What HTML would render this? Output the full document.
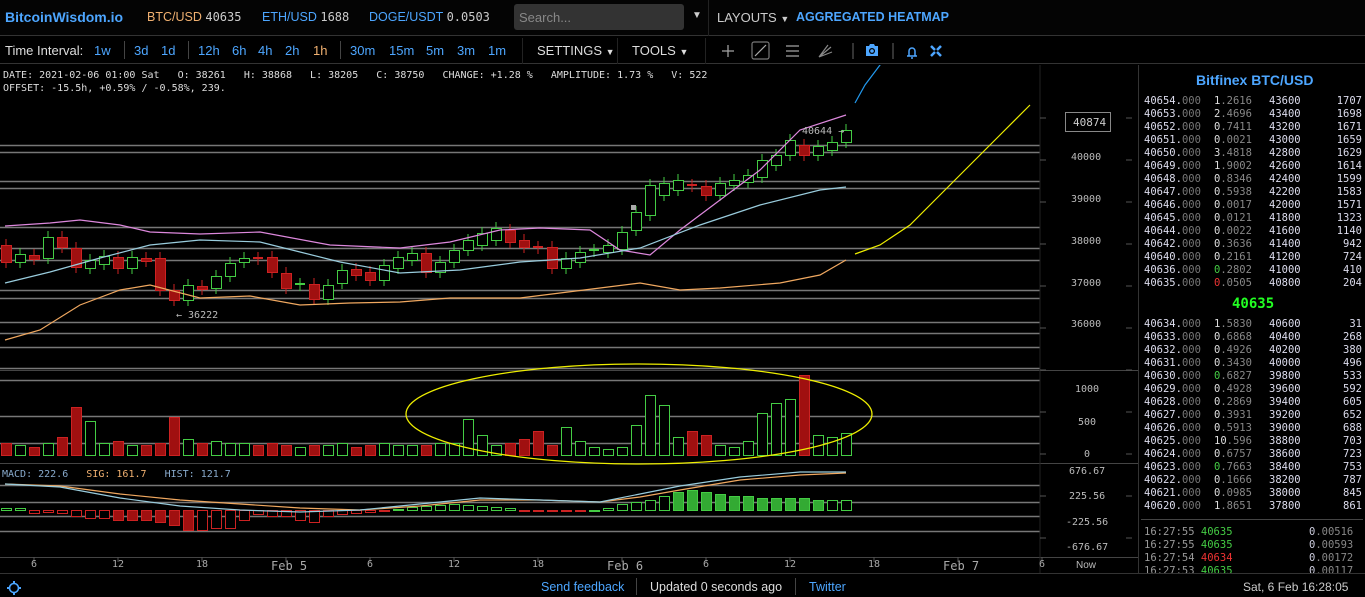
<!DOCTYPE html>
<html><head><meta charset="utf-8"><style>
*{margin:0;padding:0;box-sizing:border-box}
body{width:1365px;height:597px;background:#000;overflow:hidden;position:relative;font-family:"Liberation Sans",sans-serif;color:#ccc}
.a{position:absolute;white-space:nowrap}
.m{font-family:"DejaVu Sans Mono","Liberation Mono",monospace}
#top{top:0;left:0;width:1365px;height:36px;border-bottom:1px solid #333;background:#040404}
#tb{top:37px;left:0;width:1365px;height:27px;border-bottom:1px solid #333}
.tbi{position:absolute;top:43px;font-size:13px;color:#4da6ff}
.sep{position:absolute;width:1px;background:#444}
.ob{font-family:"DejaVu Sans Mono",monospace;font-size:10.5px;position:absolute;left:1144px;width:218px;height:13px;line-height:13px}
.ob span{position:absolute}
</style></head><body>
<div class="a" id="top"></div>
<div class="a" style="left:5px;top:9px;font-size:14px;font-weight:bold;color:#4da6ff">BitcoinWisdom.io</div>
<div class="a" style="left:147px;top:10px;font-size:12.5px;color:#f0b070">BTC/USD <span class="m" style="color:#ccc;font-size:12px">40635</span></div>
<div class="a" style="left:262px;top:10px;font-size:12.5px;color:#4da6ff">ETH/USD <span class="m" style="color:#ccc;font-size:12px">1688</span></div>
<div class="a" style="left:369px;top:10px;font-size:12.5px;color:#4da6ff">DOGE/USDT <span class="m" style="color:#ccc;font-size:12px">0.0503</span></div>
<div class="a" style="left:514px;top:4px;width:170px;height:26px;background:#333;border-radius:3px;color:#888;font-size:13px;padding:6px 5px">Search...</div>
<div class="a" style="left:692px;top:10px;font-size:10px;color:#ccc">▼</div>
<div class="sep" style="left:708px;top:0;height:36px;background:#222"></div>
<div class="a" style="left:717px;top:10px;font-size:13px;color:#ccc">LAYOUTS <span style="font-size:9px">▼</span></div>
<div class="a" style="left:796px;top:10px;font-size:12.5px;color:#4da6ff;font-weight:bold">AGGREGATED HEATMAP</div>
<div class="a" id="tb"></div>
<div class="a" style="left:5px;top:43px;font-size:13px;color:#ddd">Time Interval:</div>
<div class="tbi" style="left:94px">1w</div>
<div class="sep" style="left:124px;top:41px;height:18px"></div>
<div class="tbi" style="left:134px">3d</div><div class="tbi" style="left:161px">1d</div>
<div class="sep" style="left:188px;top:41px;height:18px"></div>
<div class="tbi" style="left:198px">12h</div><div class="tbi" style="left:232px">6h</div><div class="tbi" style="left:258px">4h</div><div class="tbi" style="left:285px">2h</div><div class="tbi" style="left:313px;color:#f0b070">1h</div>
<div class="sep" style="left:340px;top:41px;height:18px"></div>
<div class="tbi" style="left:350px">30m</div><div class="tbi" style="left:389px">15m</div><div class="tbi" style="left:426px">5m</div><div class="tbi" style="left:457px">3m</div><div class="tbi" style="left:488px">1m</div>
<div class="sep" style="left:522px;top:38px;height:26px;background:#222"></div>
<div class="a" style="left:537px;top:43px;font-size:13px;color:#ddd">SETTINGS <span style="font-size:9px">▼</span></div>
<div class="sep" style="left:617px;top:38px;height:26px;background:#222"></div>
<div class="a" style="left:632px;top:43px;font-size:13px;color:#ddd">TOOLS <span style="font-size:9px">▼</span></div>
<div class="sep" style="left:705px;top:38px;height:26px;background:#222"></div>
<svg class="a" style="left:700px;top:37px" width="250" height="28">
<g stroke="#aaa" stroke-width="1.2" fill="none">
<line x1="28" y1="8" x2="28" y2="20"/><line x1="22" y1="14" x2="34" y2="14"/>
<rect x="52" y="5" width="17" height="17" rx="2" stroke="#777"/><line x1="55" y1="19" x2="66" y2="8"/>
<line x1="86" y1="9" x2="99" y2="9"/><line x1="86" y1="14" x2="99" y2="14"/><line x1="86" y1="19" x2="99" y2="19"/>
<path d="M119 20 L131 10 M119 20 L132 15 M119 20 L128 8" stroke="#888"/>
<line x1="153" y1="6" x2="153" y2="22" stroke="#555"/>
<line x1="193" y1="6" x2="193" y2="22" stroke="#555"/>
</g>
<path d="M166 9h3l1-2h4l1 2h3v10h-12z" fill="#4da6ff"/><circle cx="172" cy="14" r="3" fill="#000"/><circle cx="172" cy="14" r="1.8" fill="#4da6ff"/>
<path d="M207 19h10M209 19v-5a3 3 0 0 1 6 0v5M211 21h2" stroke="#4da6ff" stroke-width="1.5" fill="none"/>
<path d="M231 9l4 4M241 9l-4 4M231 19l4-4M241 19l-4-4" stroke="#4da6ff" stroke-width="2.5"/>
</svg>
<div class="a m" style="left:3px;top:69px;font-size:10px;color:#ddd;line-height:13px">DATE: 2021-02-06 01:00 Sat &nbsp; O: 38261 &nbsp; H: 38868 &nbsp; L: 38205 &nbsp; C: 38750 &nbsp; CHANGE: +1.28 % &nbsp; AMPLITUDE: 1.73 % &nbsp; V: 522<br>OFFSET: -15.5h, +0.59% / -0.58%, 239.</div>

<svg id="ch" class="a" style="left:0;top:65px" width="1139" height="508"></svg>
<div class="a m" style="left:2px;top:469px;font-size:10px"><span style="color:#8ac">MACD: 222.6</span> &nbsp; <span style="color:#f0b070">SIG: 161.7</span> &nbsp; <span style="color:#8ac">HIST: 121.7</span></div>
<div class="a m" style="left:176px;top:310px;font-size:10px;color:#bbb">← 36222</div>
<div class="a m" style="left:802px;top:126px;font-size:10px;color:#bbb">40644 →</div>
<div class="a m" style="left:1065px;top:112px;width:46px;height:20px;border:1px solid #888;font-size:11px;color:#ccc;padding:3px 4px 0 7px">40874</div>
<div class="a m" style="left:1071px;top:152px;font-size:10px;color:#bbb">40000</div>
<div class="a m" style="left:1071px;top:194px;font-size:10px;color:#bbb">39000</div>
<div class="a m" style="left:1071px;top:236px;font-size:10px;color:#bbb">38000</div>
<div class="a m" style="left:1071px;top:278px;font-size:10px;color:#bbb">37000</div>
<div class="a m" style="left:1071px;top:319px;font-size:10px;color:#bbb">36000</div>
<div class="a m" style="left:1075px;top:384px;font-size:10px;color:#bbb">1000</div>
<div class="a m" style="left:1078px;top:417px;font-size:10px;color:#bbb">500</div>
<div class="a m" style="left:1084px;top:449px;font-size:10px;color:#bbb">0</div>
<div class="a m" style="left:1069px;top:466px;font-size:10px;color:#bbb">676.67</div>
<div class="a m" style="left:1069px;top:491px;font-size:10px;color:#bbb">225.56</div>
<div class="a m" style="left:1066px;top:517px;font-size:10px;color:#bbb">-225.56</div>
<div class="a m" style="left:1066px;top:542px;font-size:10px;color:#bbb">-676.67</div>
<div class="a" style="left:1076px;top:560px;font-size:10px;color:#bbb">Now</div>
<div class="a m" id="tx" style="left:0;top:559px;font-size:10px;color:#aaa"></div>

<div class="a" style="left:1138px;top:65px;width:1px;height:508px;background:#333"></div>
<div class="a" style="left:1196px;top:72px;font-size:14px;font-weight:bold;color:#4da6ff">Bitfinex BTC/USD</div>
<div id="ob"></div>
<div class="a m" style="left:1232px;top:296px;font-size:14px;font-weight:bold;color:#2f2">40635</div>
<div class="a" style="left:1141px;top:519px;width:222px;height:1px;background:#444"></div>

<div class="a" style="left:0;top:573px;width:1365px;height:1px;background:#333"></div>
<svg class="a" style="left:7px;top:581px" width="14" height="14"><circle cx="7" cy="7" r="4.5" stroke="#4da6ff" stroke-width="1.6" fill="none"/><g stroke="#4da6ff" stroke-width="2"><line x1="7" y1="0" x2="7" y2="3"/><line x1="7" y1="11" x2="7" y2="14"/><line x1="0" y1="7" x2="3" y2="7"/><line x1="11" y1="7" x2="14" y2="7"/></g></svg>
<div class="a" style="left:541px;top:580px;font-size:12.5px;color:#4da6ff">Send feedback</div>
<div class="a" style="left:636px;top:578px;width:1px;height:17px;background:#444"></div>
<div class="a" style="left:650px;top:580px;font-size:12.5px;color:#ddd">Updated 0 seconds ago</div>
<div class="a" style="left:795px;top:578px;width:1px;height:17px;background:#444"></div>
<div class="a" style="left:809px;top:580px;font-size:12.5px;color:#4da6ff">Twitter</div>
<div class="a" style="left:1243px;top:580px;font-size:12px;color:#ccc">Sat, 6 Feb 16:28:05</div>

<script>
var S='http://www.w3.org/2000/svg',ch=document.getElementById('ch');
function el(t,a){var e=document.createElementNS(S,t);for(var k in a)e.setAttribute(k,a[k]);ch.appendChild(e);return e}
var O=65;
function hl(y,c){el('line',{x1:0,x2:1040,y1:y-O+.5,y2:y-O+.5,stroke:c||'#777','stroke-width':1.5})}
[145,152,181,188,227,248,260,290,298,322,333,347,368,380,416,443,485,502,516,531].forEach(function(y){hl(y)});
[370,463,557].forEach(function(y){el('line',{x1:0,x2:1139,y1:y-O+.5,y2:y-O+.5,stroke:'#444'})});
el('line',{x1:1040,x2:1040,y1:0,y2:508,stroke:'#222'});
for(var y=118;y<560;y+=42){el('line',{x1:1040,x2:1046,y1:y-O,y2:y-O,stroke:'#555'});el('line',{x1:1126,x2:1132,y1:y-O,y2:y-O,stroke:'#555'});}
var C=[[245,262],[262,254],[255,259],[258,237],[237,247],[248,267],[268,260],[264,256],[257,268],[268,257],[258,261],[258,290],[290,300],[300,285],[286,289],[288,276],[276,263],[262,258],[258,259],[257,272],[273,288],[285,284],[284,299],[299,285],[283,270],[269,275],[272,280],[280,265],[268,257],[260,253],[253,272],[272,262],[262,250],[250,240],[245,233],[240,228],[230,242],[240,247],[247,248],[247,268],[268,258],[262,252],[251,250],[252,245],[249,232],[230,212],[215,185],[195,183],[190,180],[185,186],[186,195],[195,183],[185,180],[182,175],[177,160],[165,155],[155,140],[145,155],[155,146],[150,142],[142,130]];
var V=[12,10,8,12,18,48,34,12,14,10,10,12,38,16,12,14,12,12,10,12,10,8,10,10,12,8,10,12,10,10,10,12,12,36,20,10,12,16,24,10,28,14,8,6,8,30,60,50,18,24,20,10,8,14,42,52,56,80,20,18,22,8];
var H=[2,2,-3,-2,-3,-6,-8,-8,-10,-10,-10,-12,-15,-20,-20,-18,-18,-10,-4,-6,-6,-10,-12,-6,-4,-3,-2,-1,1,3,4,5,6,5,4,3,2,-1,-1,-1,-1,-1,0,2,6,8,10,14,18,20,18,16,14,14,12,12,12,12,10,10,10];
for(var i=0;i<C.length;i++){var x=6+14*i,o=C[i][0],c=C[i][1],up=c<=o,col=up?'#4c4':'#c22';
var t=Math.min(o,c),b=Math.max(o,c);el('line',{x1:x,x2:x,y1:t-6-O,y2:b+6-O,stroke:col});
if(b-t<2)el('rect',{x:x-5,y:t-O-1,width:10,height:2,fill:col});else el('rect',{x:x-5+.5,y:t-O+.5,width:10,height:b-t,fill:up?'#000':'#a01010',stroke:col});
var v=V[i]||10;el('rect',{x:x-5+.5,y:455-v-O+.5,width:10,height:v,fill:up?'#000':'#a01010',stroke:col});
var h=H[i]||0;
var hc=h>=0?'#4c4':'#c22',hf=(i>47&&i<59)||(i>7&&i<14)?(h>=0?'#3a3':'#a01010'):'#000';
el('rect',{x:x-5+.5,y:(h>=0?510-h:510)-O+.5,width:10,height:Math.max(Math.abs(h),1),fill:hf,stroke:hc});}
function pl(pts,c,w){el('polyline',{points:pts.map(function(p){return p[0]+','+(p[1]-O)}).join(' '),fill:'none',stroke:c,'stroke-width':w||1.2})}
pl([[5,226],[50,223],[80,220],[120,225],[150,232],[200,234],[260,232],[330,245],[400,248],[450,242],[500,230],[540,228],[590,230],[620,250],[650,255],[680,230],[720,200],[760,170],[800,130],[846,115]],'#d8d');
pl([[5,283],[50,272],[100,258],[150,245],[200,240],[260,242],[300,252],[340,262],[400,273],[460,270],[520,262],[580,258],[640,248],[700,225],[760,205],[820,190],[846,187]],'#9cd');
pl([[5,340],[40,330],[80,305],[120,290],[150,285],[200,298],[250,296],[300,305],[350,303],[400,302],[450,298],[520,298],[560,293],[600,288],[640,283],[680,290],[720,288],[780,283],[820,275],[846,260]],'#f0a860');
pl([[855,254],[880,245],[910,225],[940,195],[970,165],[1000,135],[1030,105]],'#ee0');
pl([[855,103],[865,85],[880,65],[900,45],[930,25],[960,15],[988,10]],'#29e');
el('ellipse',{cx:639,cy:414-O,rx:233,ry:50,fill:'none',stroke:'#ee0','stroke-width':1.3});
pl([[5,484],[60,486],[120,494],[180,500],[240,504],[300,508],[360,510],[420,506],[480,500],[540,500],[600,502],[640,497],[680,490],[740,480],[800,475],[846,473]],'#f0a860');
pl([[5,484],[60,487],[120,498],[180,506],[240,510],[300,512],[360,510],[420,504],[480,498],[540,500],[600,502],[640,494],[680,486],[740,477],[800,472],[846,472]],'#9cd');
el('rect',{x:631,y:205-O,width:5,height:5,fill:'#aaa'});
var tx=document.getElementById('tx'),L=[[34,'6'],[118,'12'],[202,'18'],[286,'Feb 5'],[370,'6'],[454,'12'],[538,'18'],[622,'Feb 6'],[706,'6'],[790,'12'],[874,'18'],[958,'Feb 7'],[1042,'6']],s='';
L.forEach(function(l){s+='<span style="position:absolute;left:'+(l[0]-l[1].length*3)+'px;font-size:'+(l[1].length>3?'12px':'10px')+'">'+l[1]+'</span>';el('line',{x1:l[0],x2:l[0],y1:557-O,y2:562-O,stroke:'#555'})});
tx.innerHTML=s;
var ask=[['40654','1.2616','43600','1707'],['40653','2.4696','43400','1698'],['40652','0.7411','43200','1671'],['40651','0.0021','43000','1659'],['40650','3.4818','42800','1629'],['40649','1.9002','42600','1614'],['40648','0.8346','42400','1599'],['40647','0.5938','42200','1583'],['40646','0.0017','42000','1571'],['40645','0.0121','41800','1323'],['40644','0.0022','41600','1140'],['40642','0.3636','41400','942'],['40640','0.2161','41200','724'],['40636','0.2802','41000','410'],['40635','0.0505','40800','204']];
var bid=[['40634','1.5830','40600','31'],['40633','0.6868','40400','268'],['40632','0.4926','40200','380'],['40631','0.3430','40000','496'],['40630','0.6827','39800','533'],['40629','0.4928','39600','592'],['40628','0.2869','39400','605'],['40627','0.3931','39200','652'],['40626','0.5913','39000','688'],['40625','10.596','38800','703'],['40624','0.6757','38600','723'],['40623','0.7663','38400','753'],['40622','0.1666','38200','787'],['40621','0.0985','38000','845'],['40620','1.8651','37800','861']];
var h2='';
function row(r,y,i,g){var a=r[1].split('.'),fc=g==1?'#4c4':g==2?'#e33':'#ddd';
h2+='<div class="ob" style="top:'+y+'px"><span style="left:0;color:#dde">'+r[0]+'.<span style="position:static;color:#777">000</span></span><span style="left:70px;color:#888"><span style="position:static;color:'+fc+'">'+a[0]+'</span>.'+a[1]+'</span><span style="left:125px;color:#dde">'+r[2]+'</span><span style="right:0;color:#dde">'+r[3]+'</span></div>';}
ask.forEach(function(r,i){row(r,95+13*i,i,i==13?1:i==14?2:0)});
bid.forEach(function(r,i){row(r,318+13*i,i,(i==4||i==11)?1:0)});
var tr=[['16:27:55','40635','0.00516','#4c4'],['16:27:55','40635','0.00593','#4c4'],['16:27:54','40634','0.00172','#e33'],['16:27:53','40635','0.00117','#4c4']];
tr.forEach(function(t,i){h2+='<div class="ob" style="top:'+(526+13*i)+'px;overflow:hidden;height:'+(i==3?8:13)+'px"><span style="left:0;color:#999">'+t[0]+' <span style="position:static;color:'+t[3]+'">'+t[1]+'</span></span><span style="left:165px;color:#888"><span style="position:static;color:#ccd">0</span>.'+t[2].slice(2)+'</span></div>'});
document.getElementById('ob').innerHTML=h2;
</script>
</body></html>
